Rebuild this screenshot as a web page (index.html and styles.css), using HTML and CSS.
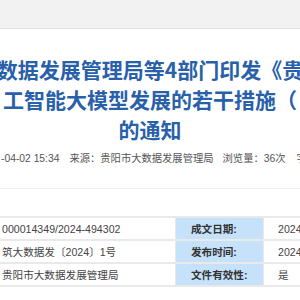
FILE: index.html
```html
<!DOCTYPE html>
<html lang="zh-CN">
<head>
<meta charset="utf-8">
<title>通知</title>
<link rel="stylesheet" href="styles.css">
</head>
<body>
<div class="topbar"></div>
<div class="article">
  <h1 class="title">
    <span class="tline">数据发展管理局等4部门印发《贵</span>
    <span class="tline">工智能大模型发展的若干措施（</span>
    <span class="tline">的通知</span>
  </h1>
  <div class="meta">
    <span class="m1">-04-02 15:34</span>
    <span class="m2">来源：贵阳市大数据发展管理局</span>
    <span class="m3">浏览量：36次</span>
    <span class="m4">字</span>
  </div>
  <div class="sep"></div>
  <div class="info">
    <div class="row">
      <div class="val first">000014349/2024-494302</div>
      <div class="lab">成文日期:</div>
      <div class="val">2024-04-02</div>
    </div>
    <div class="row">
      <div class="val first">筑大数据发〔2024〕1号</div>
      <div class="lab">发布时间:</div>
      <div class="val">2024-04-02</div>
    </div>
    <div class="row">
      <div class="val first">贵阳市大数据发展管理局</div>
      <div class="lab">文件有效性:</div>
      <div class="val">是</div>
    </div>
  </div>
</div>
</body>
</html>
```
FILE: styles.css
```css
html, body {
  margin: 0;
  padding: 0;
  width: 300px;
  height: 300px;
  overflow: hidden;
  background: #fff;
  font-family: "Liberation Sans", "Noto Sans CJK SC", sans-serif;
}
.topbar {
  height: 28px;
  background: #f2f2f2;
  border-bottom: 1px solid #e2e2e2;
}
.title {
  margin: 25px 0 0;
  display: flex;
  flex-direction: column;
  align-items: center;
  font-family: "Noto Sans CJK SC", sans-serif;
  font-weight: 700;
  font-size: 21px;
  line-height: 30px;
  color: #2860aa;
}
.tline {
  white-space: nowrap;
  display: block;
}
.meta {
  margin-top: 5px;
  display: flex;
  white-space: nowrap;
  font-size: 10.3px;
  line-height: 20px;
  color: #555;
}
.m1 { margin-left: 1px; }
.m2 { margin-left: 10px; }
.m3 { margin-left: 9px; }
.m4 { margin-left: 11px; }
.sep {
  margin-top: 19px;
  height: 1px;
  background: #f0f0f0;
}
.info {
  margin-top: 27px;
  border-top: 2px solid #e9e9e9;
}
.row {
  display: grid;
  grid-template-columns: 176px 88px 1fr;
  border-bottom: 2px solid #e9e9e9;
  height: 21px;
}
.row > div {
  display: flex;
  align-items: center;
  font-size: 10.6px;
  white-space: nowrap;
  overflow: hidden;
}
.val {
  color: #444;
  padding-left: 14px;
}
.val.first {
  padding-left: 2px;
  border-right: 1px solid #e9e9e9;
}
.lab {
  background: #c6e2fb;
  color: #333;
  font-weight: 700;
  padding-left: 15px;
  border-right: 1px solid #e9e9e9;
}
```
